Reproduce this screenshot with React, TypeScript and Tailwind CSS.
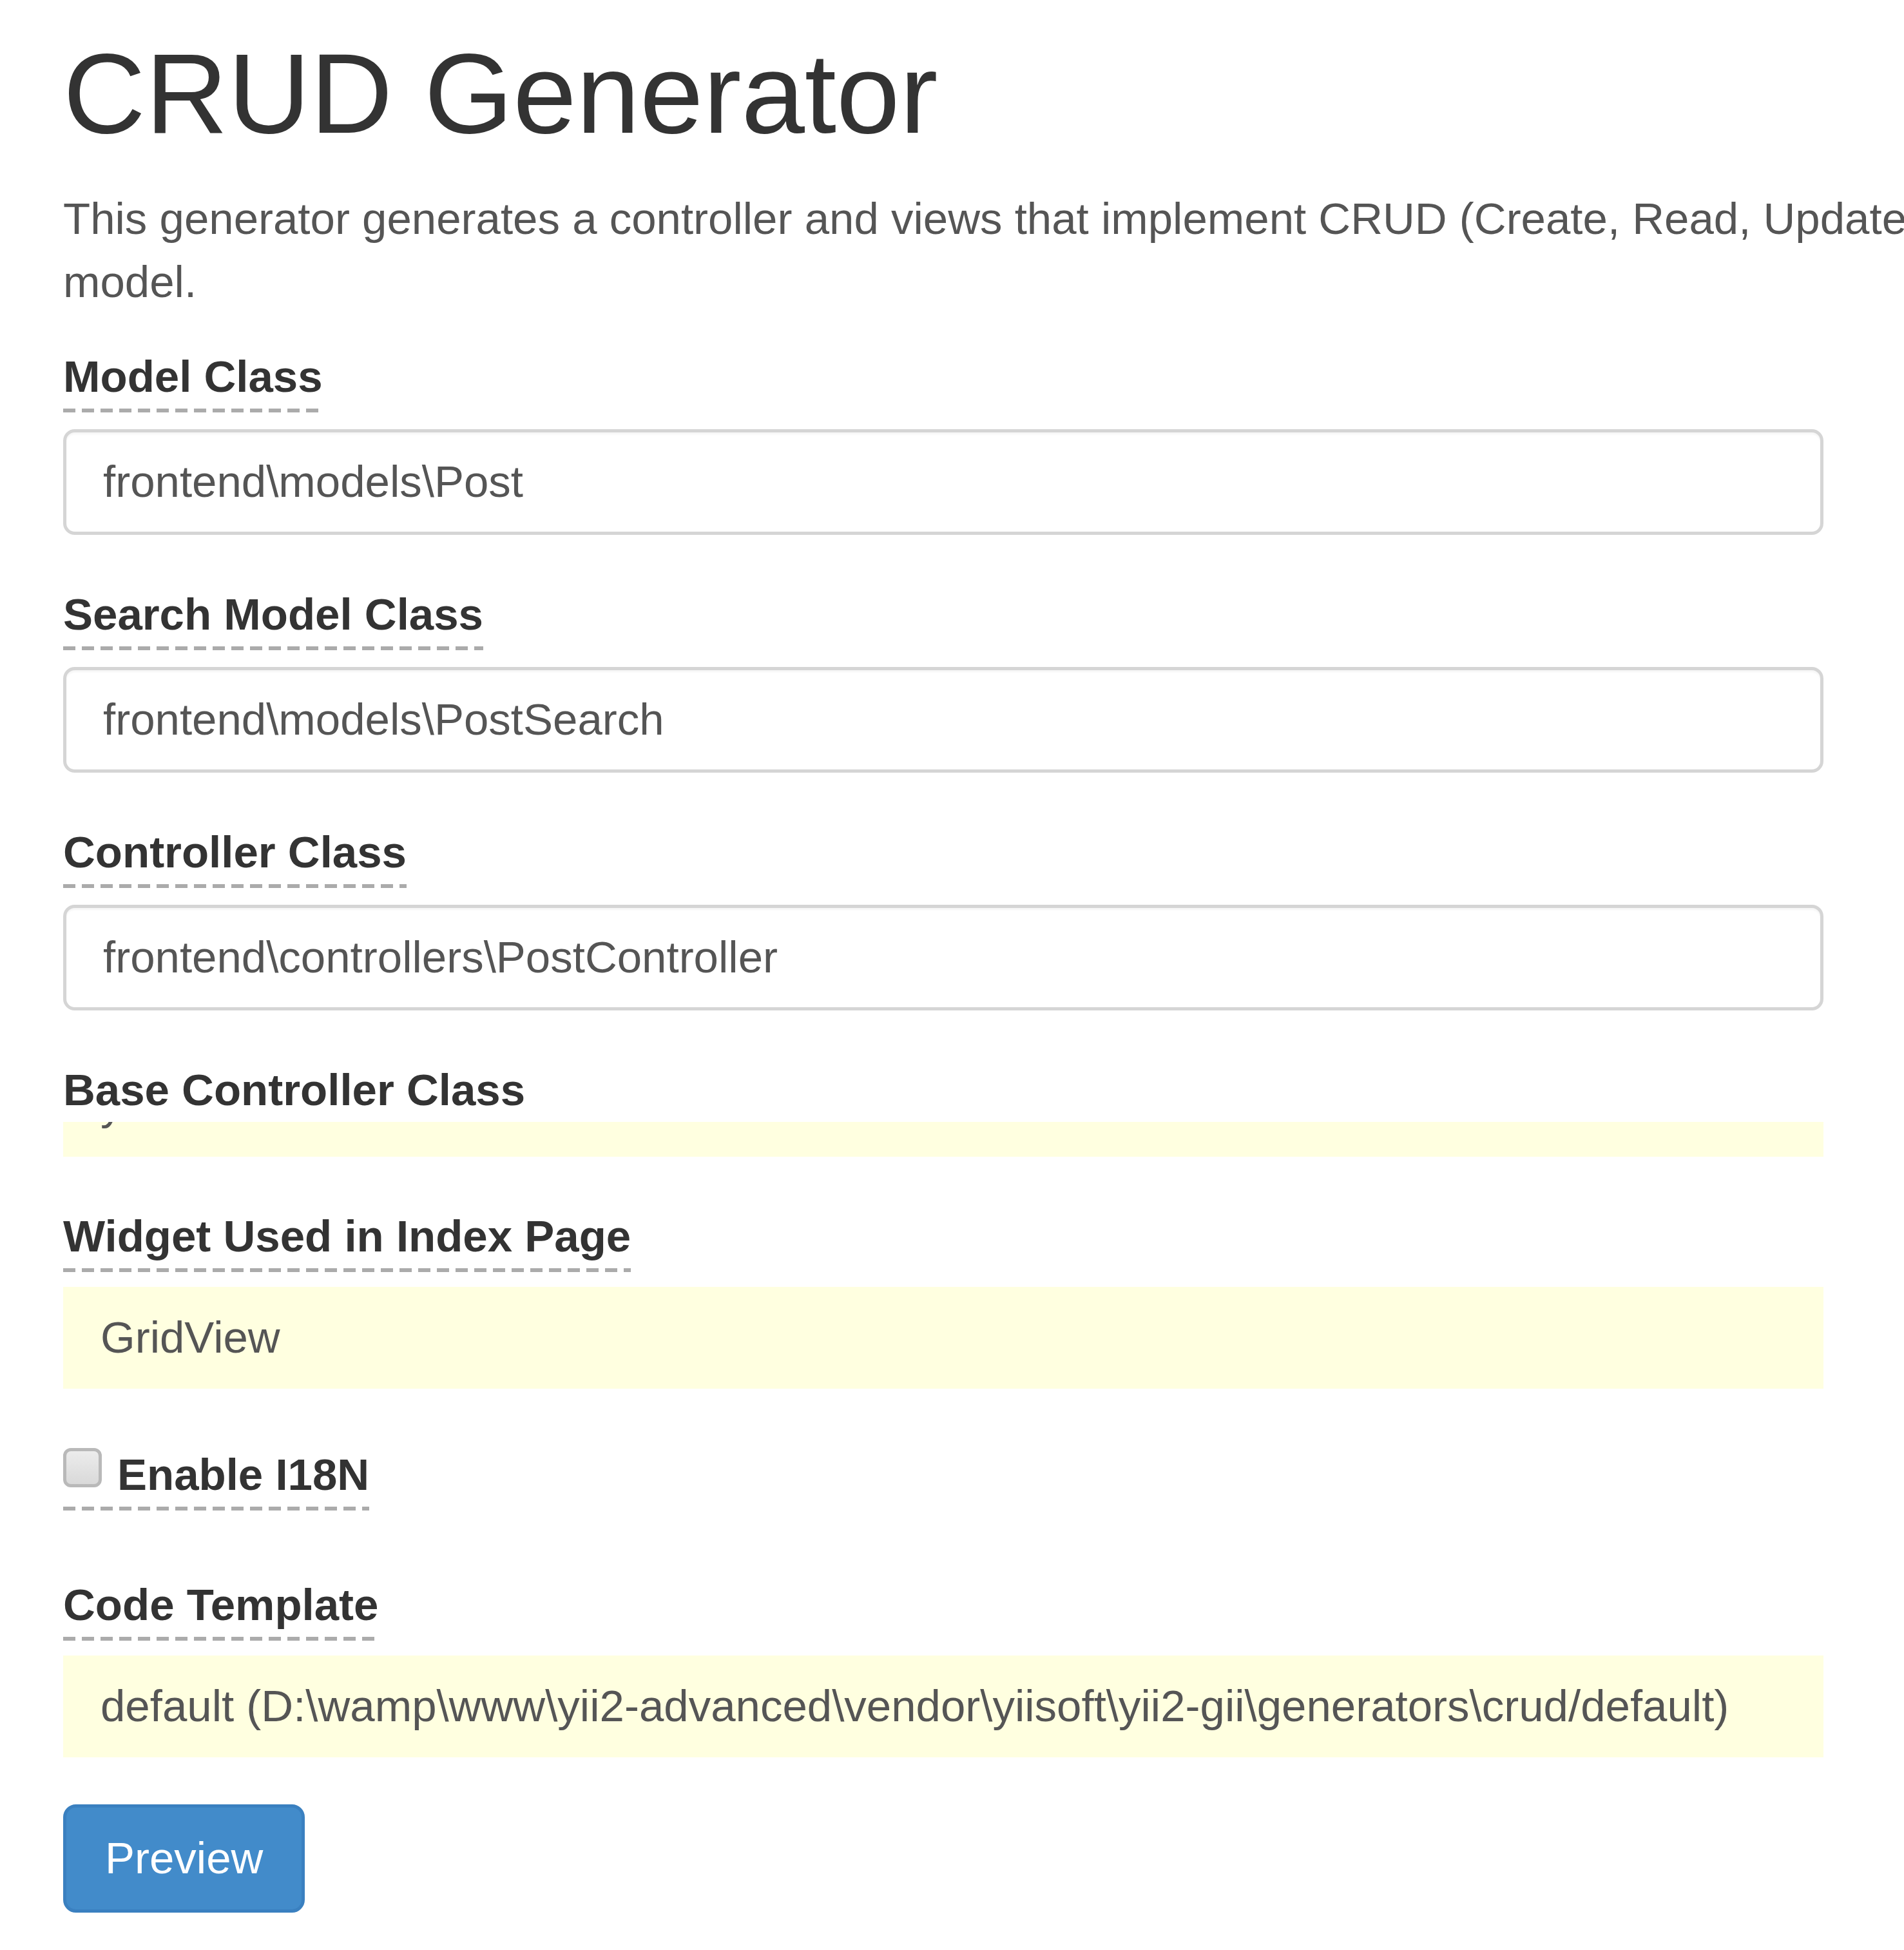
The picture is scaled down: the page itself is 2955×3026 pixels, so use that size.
import React from "react";

const font = "font-['Liberation_Sans',Arial,sans-serif]";

const Label: React.FC<{ children: React.ReactNode; underline?: boolean }> = ({
  children,
  underline = true,
}) => (
  <div className="inline-flex flex-col self-start">
    <span className="text-[69px] leading-[98px] font-bold text-[#333]">
      {children}
    </span>
    {underline && (
      <div className="h-[6px] bg-[repeating-linear-gradient(90deg,#ababab_0px,#ababab_19px,transparent_19px,transparent_29px)]" />
    )}
  </div>
);

const TextInput: React.FC<{ value: string }> = ({ value }) => (
  <div className="mt-[26px] h-[164px] border-[5px] border-[#d5d5d5] rounded-[18px] bg-white flex items-center pl-[57px] text-[69px] leading-[98px] text-[#555] shadow-[inset_0_3px_3px_rgba(0,0,0,0.04)]">
    {value}
  </div>
);

const StickyValue: React.FC<{ value: string }> = ({ value }) => (
  <div className="mt-[23px] bg-[#ffffe0] py-[30px] pl-[58px] text-[69px] leading-[98px] text-[#555] whitespace-nowrap">
    {value}
  </div>
);

const App: React.FC = () => {
  return (
    <div
      className={`${font} w-[2955px] h-[3026px] overflow-hidden bg-white pt-[45px] pl-[98px]`}
    >
      <h1 className="text-[177px] leading-[200px] font-normal text-[#333] whitespace-nowrap">
        CRUD Generator
      </h1>
      <p className="mt-[46px] text-[69px] leading-[98px] text-[#555] whitespace-nowrap">
        This generator generates a controller and views that implement CRUD
        (Create, Read, Update, Delete) operations for the specified data
        <br />
        model.
      </p>

      <div className="w-[2732px] flex flex-col">
        <div className="mt-[49px] flex flex-col">
          <Label>Model Class</Label>
          <TextInput value="frontend\models\Post" />
        </div>

        <div className="mt-[75px] flex flex-col">
          <Label>Search Model Class</Label>
          <TextInput value="frontend\models\PostSearch" />
        </div>

        <div className="mt-[75px] flex flex-col">
          <Label>Controller Class</Label>
          <TextInput value="frontend\controllers\PostController" />
        </div>

        <div className="mt-[75px] flex flex-col">
          <Label underline={false}>Base Controller Class</Label>
          <div className="h-[54px] overflow-hidden bg-[#ffffe0] pl-[58px]">
            <div className="-mt-[76px] text-[69px] leading-[98px] text-[#555] whitespace-nowrap">
              yii\web\Controller
            </div>
          </div>
        </div>

        <div className="mt-[75px] flex flex-col">
          <Label>Widget Used in Index Page</Label>
          <StickyValue value="GridView" />
        </div>

        <div className="mt-[85px] flex flex-col">
          <div className="inline-flex flex-col self-start">
            <label className="flex items-start">
              <span className="mt-[7px] w-[60px] h-[61px] rounded-[12px] border-[5px] border-[#b9b9b9] bg-[linear-gradient(#ececec,#d9d9d9)]" />
              <span className="ml-[24px] text-[69px] leading-[98px] font-bold text-[#333]">
                Enable I18N
              </span>
            </label>
            <div className="h-[6px] bg-[repeating-linear-gradient(90deg,#ababab_0px,#ababab_19px,transparent_19px,transparent_29px)]" />
          </div>
        </div>

        <div className="mt-[98px] flex flex-col">
          <Label>Code Template</Label>
          <StickyValue value="default (D:\wamp\www\yii2-advanced\vendor\yiisoft\yii2-gii\generators\crud/default)" />
        </div>

        <div className="mt-[73px]">
          <button className="h-[168px] px-[60px] border-[5px] border-[#3a80c0] rounded-[20px] bg-[#428bca] text-white text-[69px] leading-[98px]">
            Preview
          </button>
        </div>
      </div>
    </div>
  );
};

export default App;
